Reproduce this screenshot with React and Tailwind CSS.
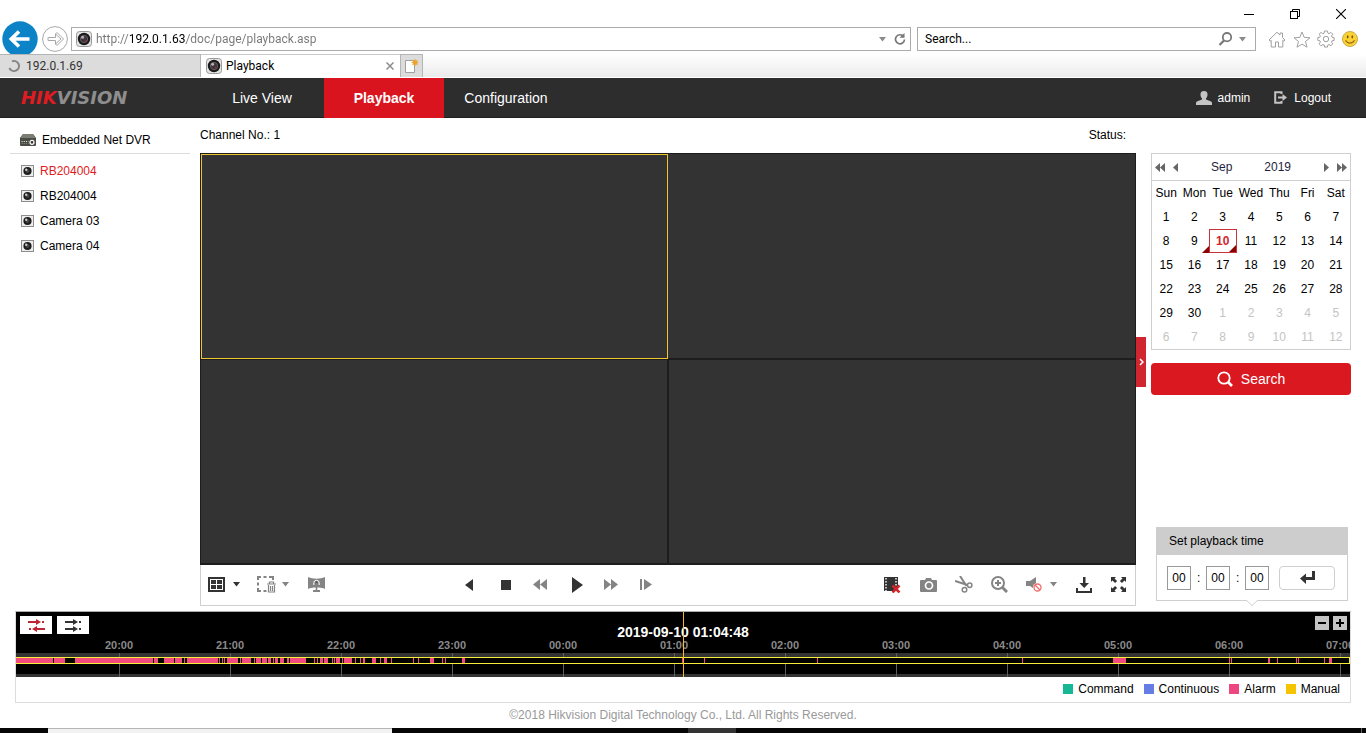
import React from "react";

const CHROME_FONT = "font-['Roboto','Noto_Sans',sans-serif]";
const PAGE_FONT = "font-['Liberation_Sans',Arial,sans-serif]";

function LensIcon({ size = 16 }) {
  return (
    <svg width={size} height={size} viewBox="0 0 16 16" aria-hidden="true" className="shrink-0">
      <rect x="0.5" y="0.5" width="15" height="15" rx="3" fill="#e6e3e3" stroke="#9a9a9a" />
      <circle cx="8" cy="8" r="6.2" fill="#191919" />
      <circle cx="8" cy="8" r="3.7" fill="#3b3338" stroke="#6f6870" strokeWidth="0.8" />
      <circle cx="6.6" cy="6.2" r="1.5" fill="#b9aebb" />
      <circle cx="9.4" cy="9.6" r="1.1" fill="#7d3034" />
    </svg>
  );
}

function CameraIcon() {
  return (
    <svg width="13" height="12" viewBox="0 0 13 12" aria-hidden="true" className="shrink-0">
      <rect x="0.5" y="0.5" width="12" height="11" fill="#ededed" stroke="#8e8e8e" />
      <circle cx="6.5" cy="6" r="4.1" fill="#1c1c1c" />
      <circle cx="6.5" cy="6" r="2" fill="#444" />
      <circle cx="5.2" cy="4.7" r="1.2" fill="#c9c9c9" />
    </svg>
  );
}

function DvrIcon() {
  return (
    <svg width="16" height="12" viewBox="0 0 16 12" aria-hidden="true" className="shrink-0">
      <path d="M3 0h10l3 4v7a1 1 0 0 1-1 1H1a1 1 0 0 1-1-1V4z" fill="#4a4d46" />
      <path d="M3 0h10l3 4H0z" fill="#7b7e74" />
      <path d="M1.500 7.500h7" stroke="#d9dbc9" strokeWidth="1.200" strokeDasharray="1.200 1" />
      <path d="M1.500 9.500h7" stroke="#8c9080" strokeWidth="0.800" strokeDasharray="1.200 1" />
      <circle cx="12" cy="8.300" r="2" fill="#333" stroke="#fff" strokeWidth="1.200" />
    </svg>
  );
}

function Caret({ color = "#8a8a8a" }) {
  return (
    <svg width="7" height="5" viewBox="0 0 7 5" aria-hidden="true">
      <path d="M0 0h7L3.500 4.500z" fill={color} />
    </svg>
  );
}

function IconButton({ label, className = "", children }) {
  return (
    <button type="button" aria-label={label} className={"flex h-6 items-center justify-center " + className}>
      {children}
    </button>
  );
}

function WindowControls() {
  return (
    <div className="flex h-[27px] items-center justify-end gap-9 pr-5">
      <IconButton label="Minimize">
        <svg width="10" height="10" viewBox="0 0 10 10"><path d="M0 5.500h10" stroke="#000" /></svg>
      </IconButton>
      <IconButton label="Restore">
        <svg width="10" height="10" viewBox="0 0 10 10" fill="none" stroke="#000">
          <rect x="0.5" y="2.5" width="7" height="7" />
          <path d="M2.500 2.500v-2h7v7h-2" />
        </svg>
      </IconButton>
      <IconButton label="Close">
        <svg width="10" height="10" viewBox="0 0 10 10"><path d="M0 0l10 10M10 0L0 10" stroke="#000" strokeWidth="1.100" /></svg>
      </IconButton>
    </div>
  );
}

function AddressRow() {
  return (
    <div className="flex h-[27px] items-start">
      <div className="flex w-[71px] shrink-0">
        <button type="button" aria-label="Back" className="-mt-[6px] ml-[2px] h-[33px] w-9 overflow-hidden">
          <svg width="36" height="36" viewBox="0 0 36 36">
            <circle cx="18" cy="18" r="17.700" fill="#0b83c6" />
            <path d="M27.500 18H10M17 10.500L9.300 18l7.700 7.500" fill="none" stroke="#fff" strokeWidth="3.600" />
          </svg>
        </button>
        <button type="button" aria-label="Forward" className="-mt-px ml-1 h-[26px] w-[26px]">
          <svg width="26" height="26" viewBox="0 0 26 26" fill="none" stroke="#a8a8a8">
            <circle cx="13" cy="13" r="12.400" />
            <path d="M6 11.500h7.500V8l5.500 5-5.500 5v-3.500H6z" />
            <path d="M13.500 8l1.500-1.500L21.500 13 15 19.500 13.500 18" />
          </svg>
        </button>
      </div>
      <div className="flex h-6 min-w-0 flex-1 items-center border border-[#ababab] bg-white px-1">
        <LensIcon />
        <input
          aria-label="Address"
          defaultValue="http://192.0.1.63/doc/page/playback.asp"
          className="ml-1 h-[22px] min-w-0 flex-1 bg-[linear-gradient(to_right,#777_34px,#000_34px,#000_90px,#777_90px)] bg-clip-text text-xs text-transparent caret-black outline-none"
        />
        <IconButton label="Address history" className="mr-2"><Caret /></IconButton>
        <IconButton label="Refresh">
          <svg width="12" height="12" viewBox="0 0 12 12">
            <path d="M9.700 3.700A4.500 4.500 0 1 0 10.500 6.500" fill="none" stroke="#777" strokeWidth="1.700" />
            <path d="M5.500 4.700h5V0z" fill="#777" />
          </svg>
        </IconButton>
      </div>
      <div className="ml-[6px] flex h-6 w-[339px] shrink-0 items-center border border-[#ababab] bg-white pr-[9px] pl-[7px]">
        <input
          aria-label="Search the web"
          placeholder="Search..."
          className="h-[22px] min-w-0 flex-1 text-xs text-black outline-none placeholder:text-black"
        />
        <IconButton label="Run web search" className="mr-[6px]">
          <svg width="15" height="14" viewBox="0 0 15 14" fill="none" stroke="#777">
            <circle cx="9" cy="5.200" r="4.200" strokeWidth="1.800" />
            <path d="M6.200 8.300L1.500 13" strokeWidth="2.200" />
          </svg>
        </IconButton>
        <IconButton label="Search options"><Caret /></IconButton>
      </div>
      <div className="flex h-6 w-[110px] shrink-0 items-center justify-between pr-2 pl-3">
        <IconButton label="Home">
          <svg width="18" height="17" viewBox="0 0 18 17" fill="none" stroke="#a0a0a0">
            <path d="M1 9L9 1.200l3 2.900V2h2.500v4.600L17 9l-1.200 1.200-1-.9V16h-4.300v-5h-3v5H3.200V9.300l-1 .9z" />
          </svg>
        </IconButton>
        <IconButton label="Favorites">
          <svg width="18" height="17" viewBox="0 0 18 17" fill="none" stroke="#a0a0a0">
            <path d="M9 1l2.200 5.400 5.800.4-4.500 3.700 1.500 5.700L9 13.100l-5 3.100 1.500-5.700L1 6.800l5.800-.4z" />
          </svg>
        </IconButton>
        <IconButton label="Tools">
          <svg width="18" height="18" viewBox="0 0 18 18" fill="none" stroke="#a0a0a0">
            <path d="M7.500 1h3l.4 2.200 1.200.5L14 2.400 15.800 4.200l-1.300 1.800.5 1.200 2.100.4v2.800l-2.100.4-.5 1.300 1.300 1.800-1.900 1.900-1.900-1.300-1.200.5-.4 2.100H7.600l-.4-2.100-1.300-.5-1.900 1.300-1.900-1.900 1.300-1.900-.5-1.200L.8 10.400V7.600l2.100-.4.5-1.200-1.300-1.800L4 2.400l1.800 1.300 1.300-.5z" />
            <circle cx="9" cy="9" r="2.700" />
          </svg>
        </IconButton>
        <IconButton label="Feedback">
          <svg width="16" height="16" viewBox="0 0 16 16">
            <circle cx="8" cy="8" r="7.500" fill="#fbd230" stroke="#c9a94e" />
            <ellipse cx="5.700" cy="5.800" rx="0.900" ry="1.600" fill="#77551a" />
            <ellipse cx="10.300" cy="5.800" rx="0.900" ry="1.600" fill="#77551a" />
            <path d="M3.500 9.300c1.700 3.700 7.300 3.700 9 0" fill="none" stroke="#9a6b1d" strokeWidth="1.100" />
          </svg>
        </IconButton>
      </div>
    </div>
  );
}

function TabStrip() {
  return (
    <div className="flex h-6 border-b border-white bg-linear-to-b from-white to-[#ebebeb] text-xs text-[#222]">
      <button type="button" className="flex w-[201px] items-center gap-[6px] border-t border-r border-[#b5b5b5] bg-[#dcdcdc] pl-2 text-[#333]">
        <svg width="12" height="12" viewBox="0 0 12 12" aria-hidden="true">
          <path d="M4 1.400A5 5 0 1 1 1.400 8" fill="none" stroke="#858585" strokeWidth="2" />
        </svg>
        192.0.1.69
      </button>
      <div className="flex w-[199px] items-center border-t border-[#c8c8c8] bg-white pr-[6px] pl-[5px]">
        <LensIcon />
        <span className="ml-1 flex-1 text-black">Playback</span>
        <IconButton label="Close tab">
          <svg width="8" height="8" viewBox="0 0 8 8"><path d="M.5.5l7 7M7.500.5l-7 7" stroke="#8c8c8c" strokeWidth="1.500" /></svg>
        </IconButton>
      </div>
      <button type="button" aria-label="New tab" className="flex w-[23px] items-center justify-center border border-b-0 border-[#b5b5b5] bg-[#dcdcdc]">
        <svg width="15" height="16" viewBox="0 0 15 16">
          <path d="M1.500 2.500h9v12h-9z" fill="#fff" stroke="#a0a0a0" />
          <path d="M11 .5l.8 2 2-.8-.8 2 2 .8-2 .8.8 2-2-.8-.8 2-.8-2-2 .8.8-2-2-.8 2-.8-.8-2 2 .8z" fill="#eea52c" />
        </svg>
      </button>
    </div>
  );
}

function NavBar() {
  return (
    <nav className="flex h-10 items-stretch border-b border-[#1f1f1f] bg-[#2d2d2d] text-sm text-white">
      <div className="flex w-[200px] shrink-0 items-center pl-[21px] font-['DejaVu_Sans',sans-serif] text-lg font-bold text-[#8e8e8e] italic">
        <span className="text-[#e01b22]">HIK</span>VISION
      </div>
      <a href="#live" className="flex w-[124px] items-center justify-center">Live View</a>
      <a href="#playback" aria-current="page" className="-mb-px flex w-[120px] items-center justify-center bg-[#d9141e] font-bold">Playback</a>
      <a href="#config" className="flex w-[124px] items-center justify-center">Configuration</a>
      <div className="ml-auto flex items-center pr-[35px] text-xs">
        <svg width="16" height="14" viewBox="0 0 16 14" aria-hidden="true">
          <path d="M8 0c2.500 0 3.700 1.600 3.500 4-.1 1.500-.8 2.700-1.500 3.400v1.200l4.500 1.700c.9.400 1.500 1 1.500 2V14H0v-1.700c0-1 .5-1.600 1.500-2L6 8.600V7.400C5.200 6.700 4.600 5.500 4.500 4 4.300 1.600 5.500 0 8 0z" fill="#c4c4c4" />
        </svg>
        <span className="ml-[6px]">admin</span>
        <a href="#logout" className="ml-6 flex items-center gap-[7px]">
          <svg width="13" height="13" viewBox="0 0 13 13" aria-hidden="true">
            <path d="M7.500 3V1.200H1.200v10.600h6.300V10" fill="none" stroke="#c4c4c4" strokeWidth="2" />
            <path d="M4 5.500h4.500v-2.500l4.500 3.500-4.500 3.500V7.500H4z" fill="#c4c4c4" />
          </svg>
          Logout
        </a>
      </div>
    </nav>
  );
}

const cameras = ["RB204004", "RB204004", "Camera 03", "Camera 04"];

function Sidebar() {
  return (
    <aside className="w-[180px] shrink-0">
      <div className="flex h-9 items-center gap-[6px] border-b border-[#dcdcdc] pt-2 pl-[10px]">
        <DvrIcon />
        Embedded Net DVR
      </div>
      <ul className="pt-1">
        {cameras.map((name, i) => (
          <li key={i}>
            <button type="button" className={"flex h-[25px] w-full items-center gap-[6px] pl-[11px] " + (i === 0 ? "text-[#e01b22]" : "")}>
              <CameraIcon />
              {name}
            </button>
          </li>
        ))}
      </ul>
    </aside>
  );
}

function PlayerToolbar() {
  return (
    <div className="flex h-[41px] items-center border border-t-0 border-[#cfcfcf] px-[7px] pb-px">
      <div className="flex w-[249px] items-center">
        <IconButton label="Window division">
          <svg width="17" height="15" viewBox="0 0 17 15">
            <path d="M0 0h17v15H0z" fill="#333" />
            <path d="M2 2h13v11H2z" fill="#fff" />
            <path d="M3 3h5v4H3zM9 3h5v4H9zM3 8h5v4H3zM9 8h5v4H9z" fill="#333" />
          </svg>
        </IconButton>
        <IconButton label="Division options" className="ml-2"><Caret color="#333" /></IconButton>
        <IconButton label="Clear selection" className="ml-[17px]">
          <svg width="19" height="17" viewBox="0 0 19 17" fill="none" stroke="#848484">
            <path d="M1 4V1h3M6.500 1h3M12 1h4v3M1 6.500v3M1 12v3h3M6.500 15h3" strokeWidth="2" />
            <path d="M10 8h9M12.500 7.500v-1.500h4v1.500M11.500 9v7h6V9M13.500 10v5M15.500 10v5" strokeWidth="1.200" />
          </svg>
        </IconButton>
        <IconButton label="Clear options" className="ml-[6px]"><Caret color="#848484" /></IconButton>
        <IconButton label="Panorama" className="ml-[19px]">
          <svg width="17" height="15" viewBox="0 0 17 15">
            <path d="M0 0c5 2.200 12 2.200 17 0v12c-2-1-4-1.300-6-1.500H6C4 10.700 2 11 0 12z" fill="#848484" />
            <path d="M5.800 8V6a2.700 2.700 0 0 1 5.400 0v2M8.500 5v8" fill="none" stroke="#fff" strokeWidth="1" />
            <circle cx="8.500" cy="5.500" r="1.300" fill="#555" />
            <path d="M7.700 7h1.600v6H12v2H5v-2h2.700z" fill="#848484" />
          </svg>
        </IconButton>
      </div>
      <div className="flex items-center">
        <IconButton label="Reverse playback" className="w-6">
          <svg width="8" height="12" viewBox="0 0 8 12"><path d="M8 0v12L0 6z" fill="#333" /></svg>
        </IconButton>
        <IconButton label="Stop" className="ml-[13px] w-6">
          <svg width="10" height="10" viewBox="0 0 10 10"><path d="M0 0h10v10H0z" fill="#333" /></svg>
        </IconButton>
        <IconButton label="Slow forward" className="ml-[10px] w-6">
          <svg width="14" height="11" viewBox="0 0 14 11"><path d="M7 0v11L0 5.500zM14 0v11L7 5.500z" fill="#848484" /></svg>
        </IconButton>
        <IconButton label="Play" className="ml-[13px] w-6">
          <svg width="11" height="16" viewBox="0 0 11 16"><path d="M0 0v16l11-8z" fill="#333" /></svg>
        </IconButton>
        <IconButton label="Fast forward" className="ml-[10px] w-6">
          <svg width="14" height="11" viewBox="0 0 14 11"><path d="M0 0v11l7-5.500zM7 0v11l7-5.500z" fill="#848484" /></svg>
        </IconButton>
        <IconButton label="Single frame" className="ml-[11px] w-6">
          <svg width="12" height="11" viewBox="0 0 12 11"><path d="M0 0h2v11H0zM4 0v11l8-5.500z" fill="#848484" /></svg>
        </IconButton>
      </div>
      <div className="ml-auto flex items-center">
        <IconButton label="Stop all playback">
          <svg width="17" height="16" viewBox="0 0 17 16">
            <path d="M0 0h14v14H0z" fill="#333" />
            <path d="M2 1v13M12 1v8" stroke="#fff" strokeWidth="1.400" strokeDasharray="1.500 1.500" />
            <path d="M8.500 8.500l7 7M15.500 8.500l-7 7" stroke="#d3262c" strokeWidth="2.500" />
          </svg>
        </IconButton>
        <IconButton label="Capture" className="ml-[19px]">
          <svg width="17" height="14" viewBox="0 0 17 14">
            <path d="M1 2h4l1-2h5l1 2h4a1 1 0 0 1 1 1v10a1 1 0 0 1-1 1H1a1 1 0 0 1-1-1V3a1 1 0 0 1 1-1z" fill="#848484" />
            <circle cx="9" cy="7.500" r="3.500" fill="none" stroke="#fff" strokeWidth="1.700" />
          </svg>
        </IconButton>
        <IconButton label="Clip" className="ml-[18px]">
          <svg width="18" height="17" viewBox="0 0 18 17" fill="none" stroke="#848484">
            <path d="M5 0l6.500 10M0 5l12.500 4" strokeWidth="2" />
            <circle cx="14.700" cy="9.300" r="2.200" strokeWidth="1.500" />
            <circle cx="9.500" cy="13.700" r="2.300" strokeWidth="1.500" />
          </svg>
        </IconButton>
        <IconButton label="Digital zoom" className="ml-[18px]">
          <svg width="17" height="17" viewBox="0 0 17 17" fill="none" stroke="#848484">
            <circle cx="7" cy="7" r="6" strokeWidth="2" />
            <path d="M4 7h6M7 4v6" strokeWidth="2" />
            <path d="M11.500 11.500l4.500 4.500" strokeWidth="3" />
          </svg>
        </IconButton>
        <IconButton label="Audio off" className="ml-[18px]">
          <svg width="16" height="15" viewBox="0 0 16 15">
            <path d="M0 4h4l6-4v13l-6-4H0z" fill="#848484" />
            <circle cx="11.500" cy="10.500" r="4.500" fill="#fff" />
            <circle cx="11.500" cy="10.500" r="3.500" fill="#fff" stroke="#f06b6b" strokeWidth="1.300" />
            <path d="M9 8l5 5" stroke="#f06b6b" strokeWidth="1.300" />
          </svg>
        </IconButton>
        <IconButton label="Volume" className="ml-[8px]"><Caret color="#848484" /></IconButton>
        <IconButton label="Download" className="ml-[19px]">
          <svg width="16" height="16" viewBox="0 0 16 16">
            <path d="M7 0h2.500v6H13l-4.800 5L3.500 6H7zM0 11h2v3h12v-3h2v5H0z" fill="#333" />
          </svg>
        </IconButton>
        <IconButton label="Full screen" className="mr-0.5 ml-[19px]">
          <svg width="15" height="15" viewBox="0 0 15 15">
            <path d="M0 0h5L3.500 1.500l2.600 2.600-2 2-2.600-2.600L0 5zM15 0v5l-1.500-1.500-2.600 2.600-2-2 2.600-2.600L10 0zM0 15v-5l1.500 1.500 2.600-2.600 2 2-2.600 2.600L5 15zM15 15h-5l1.500-1.500-2.600-2.600 2-2 2.600 2.600L15 10z" fill="#333" />
          </svg>
        </IconButton>
      </div>
    </div>
  );
}

function Player() {
  return (
    <section className="flex min-w-0 flex-1 flex-col">
      <div className="flex h-[35px] items-center justify-between pr-[10px] pb-0.5">
        <span>Channel No.: 1</span>
        <span>Status:</span>
      </div>
      <div className="grid flex-1 grid-cols-2 grid-rows-2 border border-[#1d1d1d] bg-[#1d1d1d]">
        <div className="border border-[#efc52f] bg-[#333]" />
        <div className="border-b border-[#1d1d1d] bg-[#333]" />
        <div className="mt-px mr-px mb-px bg-[#333]" />
        <div className="mt-px mb-px ml-px bg-[#333]" />
      </div>
      <PlayerToolbar />
    </section>
  );
}

const weekdays = ["Sun", "Mon", "Tue", "Wed", "Thu", "Fri", "Sat"];
const weeks = [
  [1, 2, 3, 4, 5, 6, 7],
  [8, 9, 10, 11, 12, 13, 14],
  [15, 16, 17, 18, 19, 20, 21],
  [22, 23, 24, 25, 26, 27, 28],
  [29, 30, 1, 2, 3, 4, 5],
  [6, 7, 8, 9, 10, 11, 12],
];

function RecordMark() {
  return (
    <svg width="7" height="7" viewBox="0 0 7 7" aria-hidden="true" className="absolute right-0 bottom-0">
      <path d="M7 0v7H0z" fill="#8b0000" />
    </svg>
  );
}

function Calendar() {
  return (
    <div className="border border-[#cfcfcf]">
      <div className="flex h-[27px] items-center border-b border-[#cfcfcf] px-[3px] text-[#1f1f3d]">
        <IconButton label="Previous year">
          <svg width="10" height="9" viewBox="0 0 10 9"><path d="M5 0v9L0 4.500zM10 0v9L5 4.500z" fill="#666" /></svg>
        </IconButton>
        <IconButton label="Previous month" className="ml-2">
          <svg width="5" height="9" viewBox="0 0 5 9"><path d="M5 0v9L0 4.500z" fill="#666" /></svg>
        </IconButton>
        <div className="flex flex-1 justify-center gap-8">
          <button type="button">Sep</button>
          <button type="button">2019</button>
        </div>
        <IconButton label="Next month" className="mr-2">
          <svg width="5" height="9" viewBox="0 0 5 9"><path d="M0 0v9l5-4.500z" fill="#666" /></svg>
        </IconButton>
        <IconButton label="Next year">
          <svg width="10" height="9" viewBox="0 0 10 9"><path d="M0 0v9l5-4.500zM5 0v9l5-4.500z" fill="#666" /></svg>
        </IconButton>
      </div>
      <table className="w-full table-fixed border-separate border-spacing-0 text-center">
        <thead>
          <tr>
            {weekdays.map((d) => (
              <th key={d} scope="col" className="h-6 p-0 font-normal">{d}</th>
            ))}
          </tr>
        </thead>
        <tbody>
          {weeks.map((week, w) => (
            <tr key={w}>
              {week.map((day) => {
                const outside = w > 3 && day < 20;
                const selected = w === 1 && day === 10;
                const marked = w === 1 && (day === 9 || day === 10);
                return (
                  <td
                    key={day}
                    className={
                      "relative h-6 p-0 " +
                      (outside ? "text-[#c4c4c4] " : "") +
                      (selected ? "border border-[#c8323a] font-bold text-[#d3262c]" : "")
                    }
                  >
                    {day}
                    {marked && <RecordMark />}
                  </td>
                );
              })}
            </tr>
          ))}
        </tbody>
      </table>
    </div>
  );
}

function PlaybackTime() {
  return (
    <form className="relative mt-auto mr-[3px] mb-[5px] ml-[5px] border border-[#cfcfcf]">
      <div className="-mx-px -mt-px flex h-7 items-center bg-[#cdcdcd] pl-[13px]">Set playback time</div>
      <div className="flex h-[45px] items-center gap-[6px] px-[10px]">
        {["Hours", "Minutes", "Seconds"].map((unit, i) => (
          <React.Fragment key={unit}>
            {i > 0 && <span className="w-[3px]">:</span>}
            <input
              aria-label={unit}
              defaultValue="00"
              className="h-6 w-6 border border-[#999] text-center outline-none"
            />
          </React.Fragment>
        ))}
        <button type="button" aria-label="Go to time" className="mr-0.5 ml-1 flex h-6 flex-1 items-center justify-center rounded border border-[#cfcfcf]">
          <svg width="15" height="13" viewBox="0 0 15 13">
            <path d="M12 0h3v9H6v4L0 7.500 6 2.500V6h6z" fill="#333" />
          </svg>
        </button>
      </div>
      <svg width="12" height="6" viewBox="0 0 12 6" aria-hidden="true" className="absolute top-full left-1/2 -translate-x-1/2">
        <path d="M0 0l6 5.500L12 0" fill="#fff" stroke="#cfcfcf" />
      </svg>
    </form>
  );
}

const TRACK = 1334;
const segments = [
  [0, 37], [38, 49], [59, 137], [138, 142], [148, 158], [159, 166], [168, 169], [171, 202], [203, 204],
  [206, 207], [208, 209], [211, 222], [224, 225], [226, 235], [238, 239], [240, 245], [246, 251], [252, 255],
  [257, 258], [259, 262], [264, 268], [271, 273], [274, 290], [298, 299], [301, 302], [304, 307], [308, 312],
  [316, 317], [318, 319], [320, 324], [326, 327], [328, 336], [339, 340], [344, 345], [347, 349], [356, 360],
  [364, 365], [368, 371], [375, 376], [397, 398], [402, 403], [414, 418], [426, 427], [429, 430], [446, 449],
  [666, 667], [688, 689], [801, 802], [1006, 1007], [1097, 1110], [1213, 1214], [1215, 1216], [1252, 1254],
  [1261, 1262], [1280, 1281], [1282, 1283], [1308, 1309], [1313, 1316],
];
const hours = ["20:00", "21:00", "22:00", "23:00", "00:00", "01:00", "02:00", "03:00", "04:00", "05:00", "06:00", "07:00"];
const pct = (v) => `${(v / TRACK) * 100}%`;

function Timeline() {
  return (
    <section className="mx-[15px] mt-[5px] border border-[#dcdcdc] border-t-[#aaa]">
      <div className="relative h-[65px] overflow-hidden bg-black">
        <div className="flex items-start justify-between pt-1 pr-[3px] pl-1">
          <div className="flex gap-[5px]">
            <button type="button" aria-label="Asynchronous playback" className="flex h-[18px] w-8 items-center justify-center bg-white">
              <svg width="17" height="13" viewBox="0 0 17 13" fill="#bd2633">
                <path d="M0 2h8V0l5 3-5 3V4H0zM14 2h2v2h-2zM17 9H9V7L4 10l5 3v-2h8zM1 9h2v2H1z" />
              </svg>
            </button>
            <button type="button" aria-label="Synchronous playback" className="flex h-[18px] w-8 items-center justify-center bg-white">
              <svg width="17" height="13" viewBox="0 0 17 13" fill="#333">
                <path d="M0 2h8V0l5 3-5 3V4H0zM14 2h2v2h-2zM0 9h8V7l5 3-5 3v-2H0zM14 9h2v2h-2z" />
              </svg>
            </button>
          </div>
          <div className="flex gap-1">
            <button type="button" aria-label="Zoom out" className="flex size-[14px] items-center justify-center bg-[#c4c4c4]">
              <svg width="8" height="8" viewBox="0 0 8 8"><path d="M0 4h8" stroke="#000" strokeWidth="2" /></svg>
            </button>
            <button type="button" aria-label="Zoom in" className="flex size-[14px] items-center justify-center bg-[#c4c4c4]">
              <svg width="8" height="8" viewBox="0 0 8 8"><path d="M0 4h8M4 0v8" stroke="#000" strokeWidth="2" /></svg>
            </button>
          </div>
        </div>
        <svg className="absolute inset-0 h-full w-full" viewBox="0 0 1334 65" preserveAspectRatio="none" aria-hidden="true" pointerEvents="none">
          <path d="M0 41h1334v4H0zM0 62h1334v3H0z" fill="#333" />
          {hours.map((h, i) => (
            <rect key={h} x={103 + i * 111} y="41" width="1" height="24" fill="#5e5e5e" />
          ))}
          <rect x="0.500" y="45.500" width="1333" height="6" fill="#000" stroke="#f7ee3a" />
          {segments.map(([a, b]) => (
            <rect key={a} x={a} y="46" width={b - a} height="5" fill="#f34b80" />
          ))}
        </svg>
        {hours.map((h, i) => (
          <span
            key={h}
            className="absolute top-[26px] w-10 -translate-x-1/2 text-center text-[11px] leading-[14px] font-bold text-[#8a8a8a]"
            style={{ left: pct(103 + i * 111) }}
          >
            {h}
          </span>
        ))}
        <span className="absolute top-3 left-1/2 w-40 -translate-x-1/2 text-center text-sm leading-4 font-bold text-white">
          2019-09-10 01:04:48
        </span>
        <div className="absolute inset-y-0 left-1/2 w-px bg-[#f5b92a]" />
      </div>
      <ul className="flex h-[25px] items-center justify-end gap-[10px] pr-[10px] pb-0.5">
        {[
          ["Command", "bg-[#16b794]"],
          ["Continuous", "bg-[#657ee4]"],
          ["Alarm", "bg-[#ee4680]"],
          ["Manual", "bg-[#f5c400]"],
        ].map(([name, color]) => (
          <li key={name} className="flex items-center gap-[5px]">
            <span className={"size-[10px] " + color} />
            {name}
          </li>
        ))}
      </ul>
    </section>
  );
}

export default function App() {
  return (
    <div className={"flex min-h-screen flex-col bg-white text-xs text-black " + PAGE_FONT}>
      <header className={CHROME_FONT}>
        <WindowControls />
        <AddressRow />
        <TabStrip />
      </header>
      <NavBar />
      <main className="flex flex-1 flex-col">
        <div className="flex flex-1 pr-[15px] pl-[10px]">
          <Sidebar />
          <div className="ml-[10px] flex min-w-0 flex-1">
            <Player />
          </div>
          <div className="flex w-[10px] items-center">
            <button type="button" aria-label="Collapse panel" className="flex h-[50px] w-full items-center justify-center bg-[#d0262f]">
              <svg width="5" height="8" viewBox="0 0 5 8"><path d="M1 1l3 3-3 3" fill="none" stroke="#fff" strokeWidth="1.500" /></svg>
            </button>
          </div>
          <aside className="ml-[5px] flex w-[200px] shrink-0 flex-col pt-[35px]">
            <Calendar />
            <button type="button" className="mt-[13px] flex h-8 items-center justify-center gap-2 rounded bg-[#d9181f] pb-px text-sm text-white">
              <svg width="16" height="16" viewBox="0 0 16 16" fill="none" stroke="#fff" aria-hidden="true">
                <circle cx="7" cy="7" r="5.700" strokeWidth="1.800" />
                <path d="M11 11l4 4" strokeWidth="2.600" />
              </svg>
              Search
            </button>
            <PlaybackTime />
          </aside>
        </div>
        <Timeline />
      </main>
      <footer>
        <p className="flex h-[25px] items-center justify-center pb-0.5 text-[#999]">
          ©2018 Hikvision Digital Technology Co., Ltd. All Rights Reserved.
        </p>
        <div className="flex h-[5px] bg-[#060606]">
          <span className="ml-12 w-[344px] border-t border-[#b5b5b5] bg-[#f2f2f2]" />
          <span className="ml-[296px] w-12 bg-[#333]" />
          <span className="mr-1 ml-auto w-px bg-[#666]" />
        </div>
      </footer>
    </div>
  );
}
